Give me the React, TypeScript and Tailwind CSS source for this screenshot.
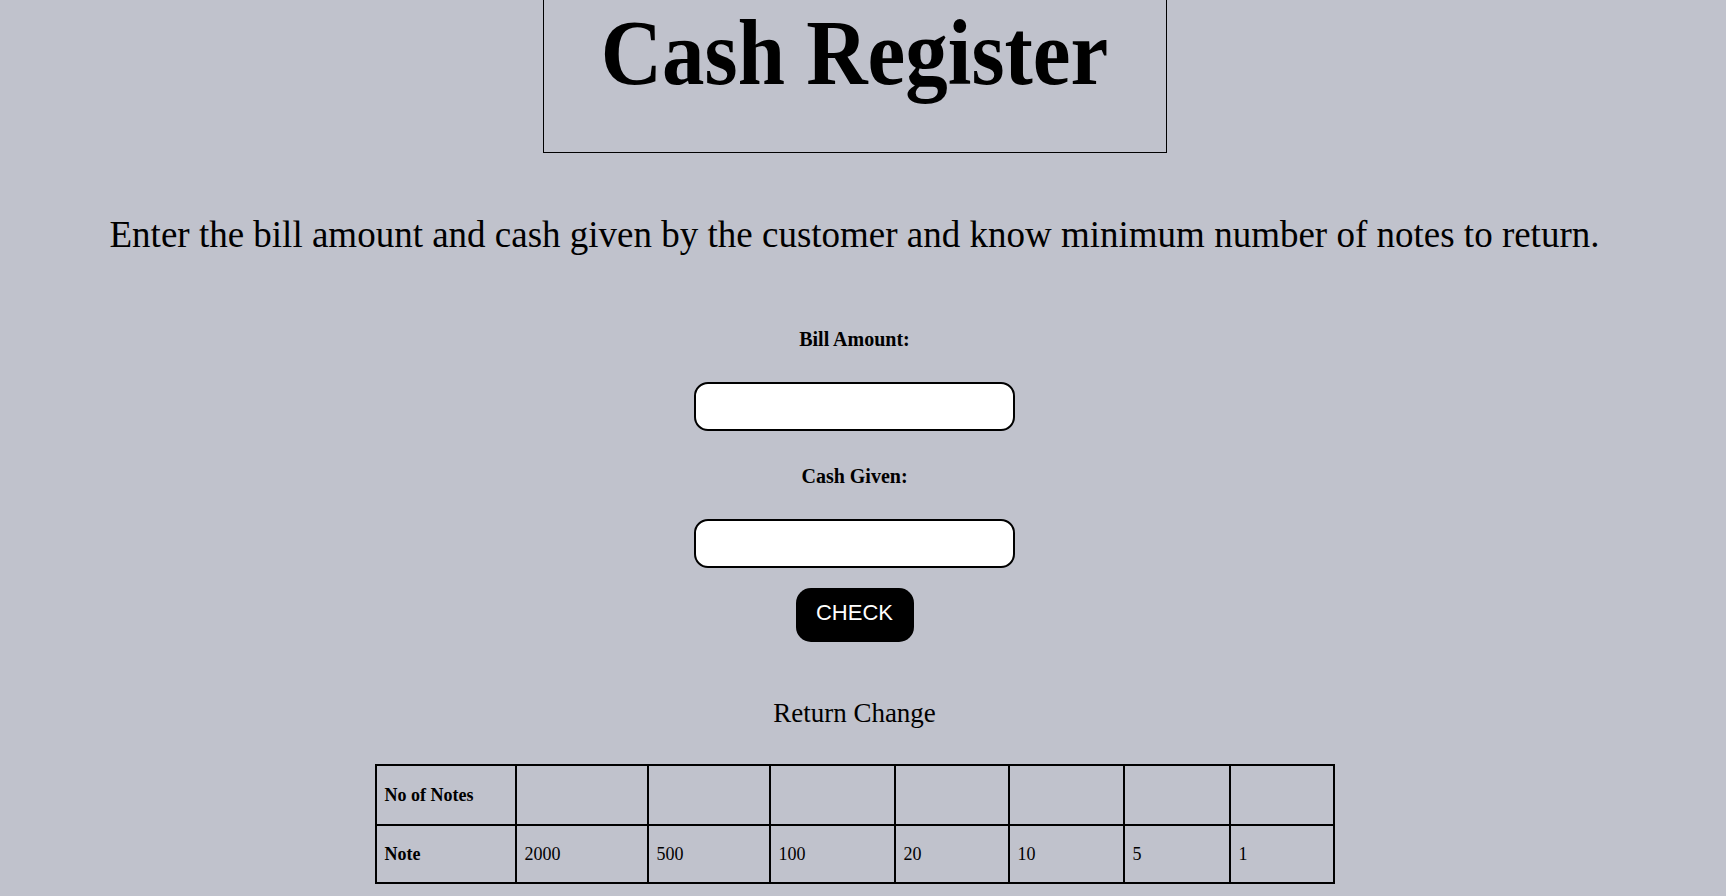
const notes = ["2000", "500", "100", "20", "10", "5", "1"];
const colWidths = ["w-[140px]", "w-[132px]", "w-[122px]", "w-[125px]", "w-[114px]", "w-[115px]", "w-[106px]", "w-[104px]"];

function Field({ label, top }: { label: string; top: string }) {
  return (
    <>
      <label className={`${top} text-[20px] font-bold leading-[23px]`}>{label}</label>
      <input
        type="number"
        className="mt-[31px] h-[49px] w-[321px] rounded-[14px] border-2 border-black bg-white px-3 text-[18px] outline-none"
      />
    </>
  );
}

export default function App() {
  return (
    <div className="min-h-[896px] bg-[#c0c2cc] pr-[17px] text-black font-['Liberation_Serif','Times_New_Roman',serif]">
      <div className="flex flex-col items-center">
        <header className="flex h-[153px] w-[624px] justify-center border-x border-b border-black">
          <h1 className="mt-[10px] h-[85px] scale-y-[1.09] text-[85px] font-bold leading-[85px]">Cash Register</h1>
        </header>

        <p className="mt-[61px] text-[37px] leading-[42px]">
          Enter the bill amount and cash given by the customer and know minimum number of notes to return.
        </p>

        <Field label="Bill Amount:" top="mt-[72px]" />
        <Field label="Cash Given:" top="mt-[34px]" />

        <button className="mt-[20px] h-[54px] w-[118px] rounded-[15px] bg-black pb-[5px] text-[22px] text-white font-['Liberation_Sans',Arial,sans-serif]">
          CHECK
        </button>

        <h2 className="mt-[56px] text-[27px] leading-[31px]">Return Change</h2>

        <table className="mt-[35px] mb-6 w-[958px] table-fixed border-collapse text-[18px]">
          <colgroup>
            {colWidths.map((w, i) => (
              <col key={i} className={w} />
            ))}
          </colgroup>
          <tbody>
            <tr className="h-[60px]">
              <th className="border-2 border-black px-[8px] text-left font-bold">No of Notes</th>
              {notes.map((n) => (
                <td key={n} className="border-2 border-black px-[8px]"></td>
              ))}
            </tr>
            <tr className="h-[58px]">
              <th className="border-2 border-black px-[8px] text-left font-bold">Note</th>
              {notes.map((n) => (
                <td key={n} className="border-2 border-black px-[8px]">{n}</td>
              ))}
            </tr>
          </tbody>
        </table>
      </div>
    </div>
  );
}
